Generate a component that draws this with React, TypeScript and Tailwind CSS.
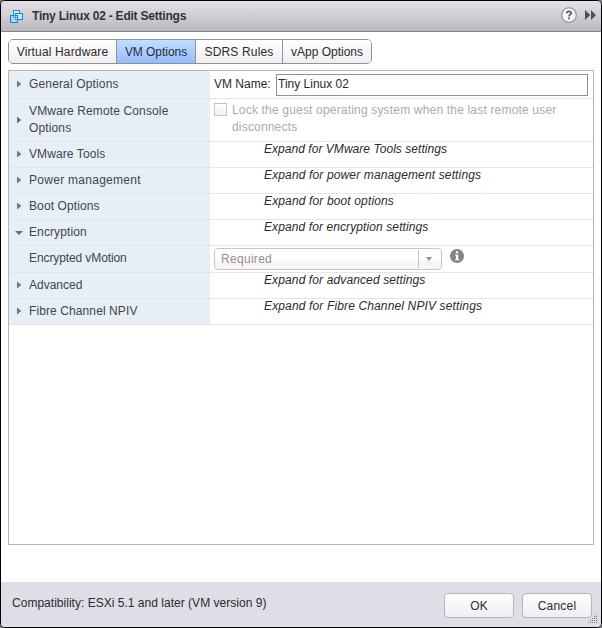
import React from 'react';

const tabs = [
  { label: 'Virtual Hardware', active: false, style: 'w-[108px] tracking-[0.15px]' },
  { label: 'VM Options', active: true, style: 'w-[79px] tracking-[-0.05px]' },
  { label: 'SDRS Rules', active: false, style: 'w-[87px] tracking-[0.15px]' },
  { label: 'vApp Options', active: false, style: 'w-[88px] tracking-[0px]' },
];

const VmIcon = () => (
  <svg width="13" height="13" viewBox="0 0 13 13" fill="none" shapeRendering="crispEdges">
    <rect x="3.5" y="0.5" width="6" height="7" fill="#d5f1ff" stroke="#2a8ae4" />
    <rect x="5.5" y="3.5" width="7" height="6" fill="#c3e9fd" stroke="#1784dc" />
    <rect x="0.5" y="5.5" width="7" height="7" fill="#a5dcfb" fillOpacity="0.8" stroke="#1784dc" />
    <path d="M4 6h3v3H4z" fill="#ecfaff" />
    <path d="M3.5 5v2.5H8M5.5 5v4.5H8" stroke="#3d9be8" />
  </svg>
);

const HelpIcon = () => (
  <svg width="16" height="16" viewBox="0 0 16 16">
    <circle cx="8" cy="8" r="7.3" fill="#f7f7f8" stroke="#8b8b90" strokeWidth="1.1" />
    <path d="M5.8 6.2C5.8 3.7 10.2 3.7 10.2 6.1C10.2 7.7 8 7.6 8 9.4" fill="none" stroke="#5d5d61" strokeWidth="1.8" />
    <rect x="7.1" y="10.5" width="1.8" height="1.8" fill="#5d5d61" />
  </svg>
);

const InfoIcon = () => (
  <svg width="14" height="14" viewBox="0 0 14 14">
    <circle cx="7" cy="7" r="7" fill="#858585" />
    <path d="M6 2.2h2.2v2H6zM5 5.5h3.2v4.8h1v1H5v-1h1V6.5H5z" fill="#fff" />
  </svg>
);

const Grip = () => (
  <svg width="10" height="10" viewBox="0 0 10 10" fill="#77777c" shapeRendering="crispEdges">
    {[0, 1, 2, 3, 4].map((row) =>
      Array.from({ length: row + 1 }, (_, i) => (
        <rect key={`${row}-${i}`} x={8 - i * 2} y={row * 2} width="1" height="1" />
      ))
    )}
  </svg>
);

const Arrow = ({ open }: { open?: boolean }) =>
  open ? (
    <svg width="8" height="4" viewBox="0 0 8 4" className="-ml-0.5" fill="#666c70">
      <path d="M0 0h8L4 4z" />
    </svg>
  ) : (
    <svg width="5" height="8" viewBox="0 0 5 8" className="mb-px" fill="#73777a">
      <path d="M0 0.5v7L4.4 4z" />
    </svg>
  );

type RowProps = {
  label: string;
  height: string;
  state?: 'open' | 'closed' | 'none';
  tracking?: string;
  children?: React.ReactNode;
};

const Row = ({ label, height, state = 'closed', tracking = 'tracking-[0.1px]', children }: RowProps) => (
  <div className={`flex border-b border-[#e5e5e5] ${height}`}>
    <div className="flex w-[201px] shrink-0 items-center bg-[#e6eff6] pl-2">
      <span className="flex w-3 shrink-0 justify-start">
        {state !== 'none' && <Arrow open={state === 'open'} />}
      </span>
      <span className={`w-[170px] leading-[17px] text-[#454545] ${state === 'none' ? 'pb-px' : ''} ${tracking}`}>
        {label}
      </span>
    </div>
    <div className="min-w-0 flex-1">{children}</div>
  </div>
);

const Hint = ({ text, tracking = 'tracking-[0.14px]' }: { text: string; tracking?: string }) => (
  <p className={`pl-[54px] leading-[15px] text-[#2b2b2b] italic ${tracking}`}>{text}</p>
);

const App: React.FC = () => {
  return (
    <div className="h-[628px] w-[602px] bg-[#77777a] font-['Liberation_Sans',Arial,sans-serif] text-[12px] text-[#2b2b2b]">
      <div className="flex h-full flex-col overflow-hidden rounded-[5px] border border-black bg-white">
        <header className="flex h-[31px] shrink-0 items-center border-b border-[#85858b] bg-linear-to-b from-[#e4dfe9] via-[#cfcfd3] to-[#b8b8bd] pr-[5px] pl-[9px]">
          <VmIcon />
          <h1 className="ml-[9px] flex-1 font-bold tracking-[-0.22px] text-[#333]">Tiny Linux 02 - Edit Settings</h1>
          <span className="flex items-center pb-[2px]">
            <HelpIcon />
            <svg width="11" height="10" viewBox="0 0 11 10" className="ml-2" fill="#505054">
              <path d="M0 0l5.3 5L0 10zM6 0l5 5-5 5z" />
            </svg>
          </span>
        </header>

        <main className="flex flex-1 flex-col px-[7px] pt-[7px]">
          <nav className="flex h-[25px] w-[364px] overflow-hidden rounded-[5px] border border-[#929296]">
            {tabs.map((tab) => (
              <button
                key={tab.label}
                className={`shrink-0 border-r border-[#929296] text-center last:border-r-0 ${tab.style} ${
                  tab.active ? 'bg-linear-to-b from-[#c0dfff] to-[#92bcff]' : 'bg-linear-to-b from-white to-[#efedf0]'
                }`}
              >
                {tab.label}
              </button>
            ))}
          </nav>

          <section className="mt-[6px] h-[475px] w-[586px] border border-[#b3b7ba]">
            <Row label="General Options" height="h-[28px]" tracking="tracking-[0.15px]">
              <div className="flex h-full items-center pl-1">
                <label className="w-[62px] pb-px">VM Name:</label>
                <input
                  className="h-[22px] w-[312px] border border-[#929294] bg-white pb-px pl-px outline-none"
                  defaultValue="Tiny Linux 02"
                />
              </div>
            </Row>
            <Row label="VMware Remote Console Options" height="h-[43px]" tracking="tracking-[0.13px]">
              <div className="flex pt-[3px] pl-1 leading-[17px] tracking-[0.18px] text-[#a9abad]">
                <span className="mt-px mr-[5px] h-[13px] w-[13px] shrink-0 border border-[#c5c5c7] bg-linear-to-b from-white to-[#f3f1f3]" />
                <span className="w-[340px]">Lock the guest operating system when the last remote user disconnects</span>
              </div>
            </Row>
            <Row label="VMware Tools" height="h-[26px]">
              <Hint text="Expand for VMware Tools settings" tracking="tracking-[0.04px]" />
            </Row>
            <Row label="Power management" height="h-[26px]" tracking="tracking-[0.28px]">
              <Hint text="Expand for power management settings" />
            </Row>
            <Row label="Boot Options" height="h-[26px]">
              <Hint text="Expand for boot options" />
            </Row>
            <Row label="Encryption" height="h-[26px]" state="open">
              <Hint text="Expand for encryption settings" tracking="tracking-[0.1px]" />
            </Row>
            <Row label="Encrypted vMotion" height="h-[27px]" state="none" tracking="tracking-[-0.1px]">
              <div className="flex pt-[2px] pl-1">
                <button className="flex h-[22px] w-[228px] items-center rounded-[4px] border border-[#c6c6c8] bg-linear-to-b from-white from-55% to-[#f7f4f7] to-60% text-left">
                  <span className="flex-1 pl-[6px] tracking-[0.3px] text-[#998d87]">Required</span>
                  <span className="flex h-[18px] w-[23px] items-center border-l border-[#c6c6c8] pl-[7px]">
                    <svg width="6" height="4" viewBox="0 0 6 4" fill="#909092">
                      <path d="M0 0h6L3 4z" />
                    </svg>
                  </span>
                </button>
                <span className="mt-px ml-[7.5px]">
                  <InfoIcon />
                </span>
              </div>
            </Row>
            <Row label="Advanced" height="h-[26px]" tracking="tracking-[0px]">
              <Hint text="Expand for advanced settings" tracking="tracking-[0.12px]" />
            </Row>
            <Row label="Fibre Channel NPIV" height="h-[26px]">
              <Hint text="Expand for Fibre Channel NPIV settings" />
            </Row>
          </section>
        </main>

        <footer className="relative flex h-[45px] shrink-0 bg-[#dedee6] pl-[11px]">
          <p className="flex-1 pt-[13px] leading-4 tracking-[0.02px]">Compatibility: ESXi 5.1 and later (VM version 9)</p>
          <div className="flex gap-2 pt-[11px] pr-[9px]">
            <button className="h-[25px] w-[70px] rounded-[4px] border border-[#b2b5b9] bg-linear-to-b from-white to-[#efedf0]">OK</button>
            <button className="h-[25px] w-[70px] rounded-[4px] border border-[#b2b5b9] bg-linear-to-b from-white to-[#efedf0] tracking-[0.2px]">
              Cancel
            </button>
          </div>
          <span className="absolute right-[3px] bottom-[3px]">
            <Grip />
          </span>
        </footer>
      </div>
    </div>
  );
};

export default App;
